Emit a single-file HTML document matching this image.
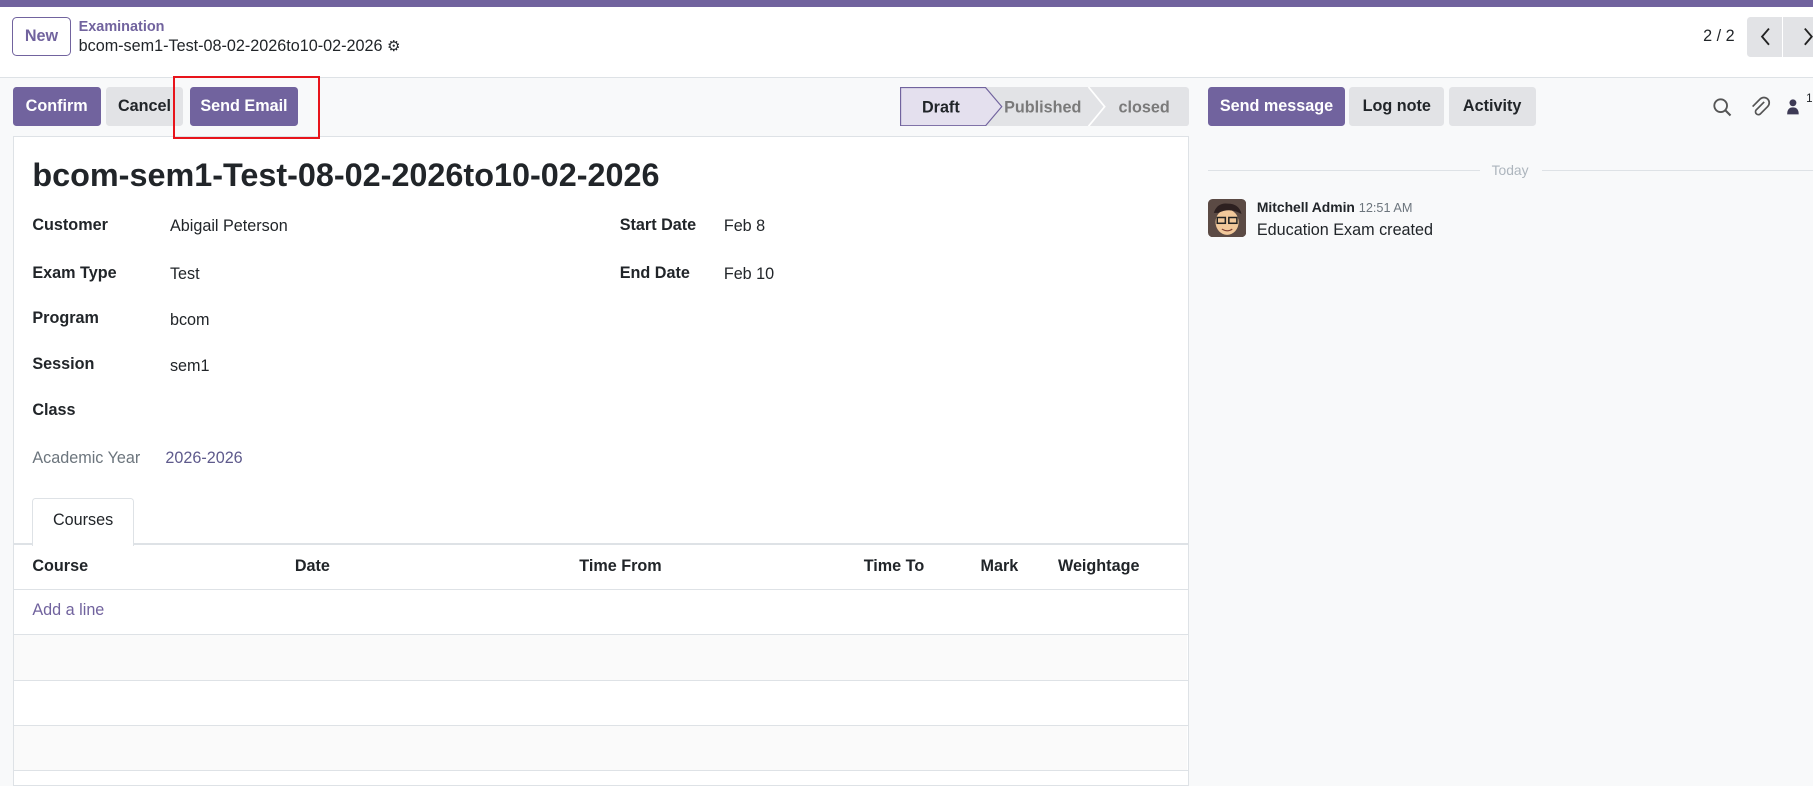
<!DOCTYPE html>
<html><head><meta charset="utf-8"><style>
html{zoom:1.15625}
body{margin:0;width:1568px;height:672px;overflow:hidden;background:#f8f9fa;font-family:"Liberation Sans","DejaVu Sans",sans-serif;font-size:14px;color:#212529;position:relative}
.a{position:absolute}
.btn{position:absolute;top:75px;height:34px;line-height:34px;border-radius:3px;font-weight:bold;font-size:14px;text-align:center}
.p{background:#71639e;color:#fff}
.g{background:#e2e3e6;color:#212529}
.lbl{position:absolute;font-weight:bold;font-size:14px}
.val{position:absolute;font-size:14px}
.hl{position:absolute;left:11px;width:1017px;height:1px;background:#dee2e6}
</style></head><body>
<div class="a" style="left:0;top:0;width:1568px;height:6px;background:#71639e"></div>
<div class="a" style="left:0;top:6px;width:1568px;height:61px;background:#fff;border-bottom:1px solid #dee2e6"></div>
<div class="a" style="left:10px;top:15px;width:50px;height:32px;border:1px solid #71639e;border-radius:4px;color:#71639e;font-weight:bold;line-height:32px;text-align:center">New</div>
<div class="a" style="left:68px;top:16px;color:#71639e;font-weight:bold;font-size:12.5px">Examination</div>
<div class="a" style="left:68px;top:32px;font-size:14px">bcom-sem1-Test-08-02-2026to10-02-2026 <span style="font-size:13px">&#9881;</span></div>
<div class="a" style="left:1473px;top:23px;font-size:14px">2 / 2</div>
<div class="a" style="left:1511px;top:15px;width:30px;height:34px;background:#e2e3e6;border-radius:3px 0 0 3px"></div>
<div class="a" style="left:1542px;top:15px;width:26px;height:34px;background:#e2e3e6"></div>
<svg class="a" style="left:1511px;top:15px" width="57" height="34"><path d="M19 10L13 17L19 24" fill="none" stroke="#222" stroke-width="1.6"/><path d="M50 10L56 17L50 24" fill="none" stroke="#222" stroke-width="1.6"/></svg>

<div class="btn p" style="left:11px;width:76px">Confirm</div>
<div class="btn g" style="left:92px;width:66px">Cancel</div>
<div class="btn p" style="left:164px;width:94px">Send Email</div>

<svg class="a" style="left:778px;top:75px" width="250" height="34">
<rect x="0" y="0" width="250" height="34" rx="3" fill="#e2e3e6"/>
<path d="M0.5 0.5H74L88 17L74 33.5H0.5Z" fill="#e4e0ee" stroke="#71639e"/>
<path d="M163 0L177 17L163 34" fill="none" stroke="#fff" stroke-width="1.5"/>
<text x="19" y="22" font-family="Liberation Sans" font-weight="bold" font-size="14" fill="#212529">Draft</text>
<text x="90" y="22" font-family="Liberation Sans" font-weight="bold" font-size="14" fill="#7a7a7a">Published</text>
<text x="189" y="22" font-family="Liberation Sans" font-weight="bold" font-size="14" fill="#7a7a7a">closed</text>
</svg>

<div class="a" style="left:11px;top:118px;width:1016px;height:560px;background:#fff;border:1px solid #dee2e6"></div>
<div class="a" style="left:150px;top:66px;width:123px;height:51px;border:2px solid #e8141b;z-index:5"></div>
<div class="a" style="left:28px;top:136px;font-size:28px;font-weight:bold">bcom-sem1-Test-08-02-2026to10-02-2026</div>
<div class="lbl" style="left:28px;top:187px">Customer</div><div class="val" style="left:147px;top:188px">Abigail Peterson</div>
<div class="lbl" style="left:28px;top:228px">Exam Type</div><div class="val" style="left:147px;top:229px">Test</div>
<div class="lbl" style="left:28px;top:267px">Program</div><div class="val" style="left:147px;top:269px">bcom</div>
<div class="lbl" style="left:28px;top:307px">Session</div><div class="val" style="left:147px;top:309px">sem1</div>
<div class="lbl" style="left:28px;top:347px">Class</div>
<div class="val" style="left:28px;top:388px;color:#6c757d">Academic Year</div><div class="val" style="left:143px;top:388px;color:#5e5a8c">2026-2026</div>
<div class="lbl" style="left:536px;top:187px">Start Date</div><div class="val" style="left:626px;top:188px">Feb 8</div>
<div class="lbl" style="left:536px;top:228px">End Date</div><div class="val" style="left:626px;top:229px">Feb 10</div>

<div class="hl" style="top:470px"></div>
<div class="a" style="left:28px;top:431px;width:86px;height:40px;background:#fff;border:1px solid #dee2e6;border-bottom:none;border-radius:3px 3px 0 0;text-align:center;line-height:38px">Courses</div>
<div class="lbl" style="left:28px;top:482px">Course</div>
<div class="lbl" style="left:255px;top:482px">Date</div>
<div class="lbl" style="left:501px;top:482px">Time From</div>
<div class="lbl" style="left:747px;top:482px">Time To</div>
<div class="lbl" style="left:848px;top:482px">Mark</div>
<div class="lbl" style="left:915px;top:482px">Weightage</div>
<div class="hl" style="top:509px"></div>
<div class="val" style="left:28px;top:520px;color:#71639e">Add a line</div>
<div class="a" style="left:12px;top:549px;width:1015px;height:39px;background:#fafafa"></div>
<div class="a" style="left:12px;top:628px;width:1015px;height:38px;background:#fafafa"></div>
<div class="hl" style="top:548px"></div>
<div class="hl" style="top:588px"></div>
<div class="hl" style="top:627px"></div>
<div class="hl" style="top:666px"></div>

<div class="btn p" style="left:1045px;width:118px">Send message</div>
<div class="btn g" style="left:1167px;width:82px">Log note</div>
<div class="btn g" style="left:1253px;width:75px">Activity</div>
<svg class="a" style="left:1481px;top:84px" width="18" height="18"><circle cx="7.5" cy="7.5" r="5.5" fill="none" stroke="#555" stroke-width="1.6"/><path d="M11.5 11.5L16 16" stroke="#555" stroke-width="1.8"/></svg>
<svg class="a" style="left:1512px;top:82px" width="20" height="20"><path d="M14 6L7 13a2.5 2.5 0 0 0 3.5 3.5L17 10a4.5 4.5 0 0 0-6.5-6.5L4 10" fill="none" stroke="#555" stroke-width="1.5"/></svg>
<svg class="a" style="left:1545px;top:84px" width="14" height="16"><circle cx="6" cy="5" r="3" fill="#3d3a55"/><path d="M1 15Q1 9 6 9Q11 9 11 15Z" fill="#3d3a55"/></svg>
<div class="a" style="left:1562px;top:80px;font-size:10px">1</div>

<div class="a" style="left:1045px;top:147px;width:235px;height:1px;background:#dee2e6"></div>
<div class="a" style="left:1334px;top:147px;width:234px;height:1px;background:#dee2e6"></div>
<div class="a" style="left:1290px;top:140px;font-size:12px;color:#adb5bd">Today</div>
<svg class="a" style="left:1045px;top:172px" width="33" height="33"><rect width="33" height="33" rx="4" fill="#5b4a44"/><ellipse cx="16.5" cy="20" rx="10" ry="11" fill="#f1c89a"/><path d="M5 12Q8 3 17 4Q27 4 29 13L25 11Q17 8 9 12Z" fill="#2d2020"/><rect x="8" y="16" width="7" height="5" fill="none" stroke="#222" stroke-width="1.3"/><rect x="18" y="16" width="7" height="5" fill="none" stroke="#222" stroke-width="1.3"/><path d="M12 26Q17 29 21 26" stroke="#7a3b2e" fill="none"/></svg>
<div class="a" style="left:1087px;top:172px;font-size:12px"><b>Mitchell Admin</b> <span style="color:#6c757d;font-size:11px">12:51 AM</span></div>
<div class="a" style="left:1087px;top:191px;font-size:14px">Education Exam created</div>
</body></html>
